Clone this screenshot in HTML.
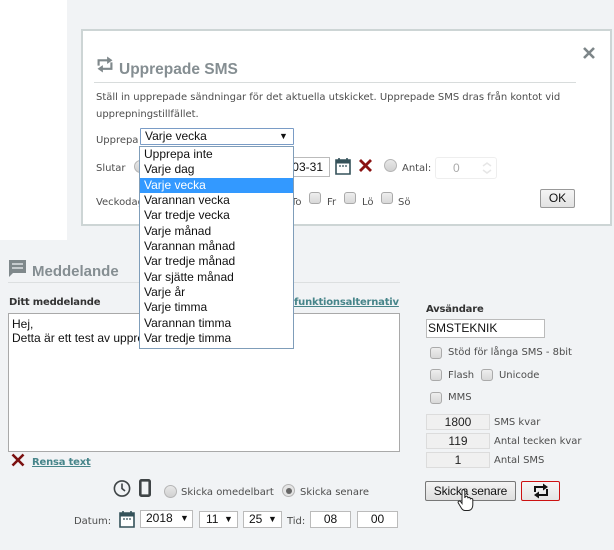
<!DOCTYPE html>
<html><head><meta charset="utf-8">
<style>
html,body{margin:0;padding:0;}
body{width:614px;height:550px;background:#f1f3f5;position:relative;overflow:hidden;font-family:"Liberation Sans",sans-serif;}
.a{position:absolute;white-space:nowrap;}
.v{font-family:"DejaVu Sans",sans-serif;font-size:10px;color:#4d4d4d;line-height:12px;letter-spacing:-.02px;}
.b{font-weight:bold;letter-spacing:-.2px;}
.box{position:absolute;box-sizing:border-box;background:#fff;border:1px solid #bbb;font-size:12px;color:#111;text-align:center;}
.cb{position:absolute;box-sizing:border-box;width:12px;height:12px;border:1px solid #aaa;border-radius:3px;background:linear-gradient(#eee,#d8d8d8);}
.rd{position:absolute;box-sizing:border-box;width:13px;height:13px;border:1px solid #b5b5b5;border-radius:50%;background:linear-gradient(#e8e8e8,#d0d0d0);}
.stat{position:absolute;box-sizing:border-box;left:426px;width:64px;height:16px;border:1px solid #dcdcdc;background:#f0f0f0;font-size:12px;line-height:14px;color:#222;text-align:center;}
.it{position:absolute;left:4px;font-size:12px;line-height:15px;color:#111;white-space:nowrap;}
svg{position:absolute;overflow:visible;}
</style></head><body>
<div class="a" style="left:0;top:0;width:67px;height:240px;background:#fff;"></div>

<!-- modal -->
<div class="a" style="left:81px;top:29px;width:531px;height:197px;box-sizing:border-box;background:#fff;border:2px solid #cdd5d5;"></div>
<svg style="left:97px;top:56px" width="16" height="16" viewBox="0 0 14 15" fill="none" stroke="#7f888b" stroke-width="2"><path d="M1 9V4H10"/><path d="M9 .5L14 4 9 7.500z" fill="#7f888b" stroke="none"/><path d="M13 6V12H4"/><path d="M5 8.500L0 12l5 3.500z" fill="#7f888b" stroke="none"/></svg>
<div class="a" style="left:119px;top:61px;font-size:15.5px;line-height:18px;font-weight:bold;color:#858e92;">Upprepade SMS</div>
<div class="a" style="left:94px;top:82px;width:482px;height:1px;background:#d8dcdc;"></div>
<svg style="left:582px;top:46px" width="14" height="14" viewBox="0 0 14 14" stroke="#7d8689" stroke-width="2.6" fill="none"><path d="M2 2l10 10M12 2L2 12"/></svg>
<div class="a v" style="left:96px;top:92px;">Ställ in upprepade sändningar för det aktuella utskicket. Upprepade SMS dras från kontot vid</div>
<div class="a v" style="left:96px;top:109px;">upprepningstillfället.</div>
<div class="a v" style="left:96px;top:135px;">Upprepa</div>
<div class="a v" style="left:96px;top:163px;">Slutar</div>
<div class="a v" style="left:96px;top:197px;">Veckodag</div>
<div class="rd" style="left:134px;top:160px;"></div>
<div class="box" style="left:240px;top:157px;width:90px;height:20px;text-align:right;padding:2px 6px 0 0;line-height:15px;">2019-03-31</div>
<svg style="left:335px;top:157px" width="16" height="18" viewBox="0 0 16 18"><path d="M1 3h14v14H1z" fill="#fff" stroke="#35525a" stroke-width="1.6"/><path d="M1 3h14v3.500H1z" fill="#35525a"/><path d="M4 1v3M12 1v3" stroke="#35525a" stroke-width="1.600"/><path d="M4 9h2M7 9h2M10 9h2" stroke="#35525a" stroke-width="1.200"/></svg>
<svg style="left:359px;top:159px" width="13" height="13" viewBox="0 0 13 13" stroke="#8a1212" stroke-width="2.800" fill="none"><path d="M1 1l11 11M12 1L1 12"/></svg>
<div class="rd" style="left:384px;top:159px;"></div>
<div class="a v" style="left:402px;top:163px;">Antal:</div>
<div class="a" style="left:435px;top:157px;width:62px;height:22px;box-sizing:border-box;border:1px solid #eee;border-radius:3px;background:#fff;font-size:12px;line-height:20px;color:#aaa;"><span style="position:absolute;left:17px;">0</span></div>
<svg style="left:481px;top:161px" width="12" height="14" viewBox="0 0 12 14" fill="none" stroke="#e6e6e6" stroke-width="1.500"><path d="M2 5l4-3 4 3M2 9l4 3 4-3"/></svg>
<div class="a v" style="left:291px;top:197px;">To</div>
<div class="cb" style="left:309px;top:192px;"></div><div class="a v" style="left:327px;top:197px;">Fr</div>
<div class="cb" style="left:344px;top:192px;"></div><div class="a v" style="left:362px;top:197px;">Lö</div>
<div class="cb" style="left:381px;top:192px;"></div><div class="a v" style="left:398px;top:197px;">Sö</div>
<div class="a" style="left:540px;top:189px;width:35px;height:19px;box-sizing:border-box;border:1px solid #999;border-radius:2px;background:linear-gradient(#f5f5f5,#e2e2e2);font-size:12px;line-height:17px;text-align:center;color:#111;">OK</div>

<!-- lower section -->
<svg style="left:9px;top:260px" width="17" height="17" viewBox="0 0 17 17"><path d="M0 0h17v13H4l-4 4z" fill="#7f888b"/><path d="M3 4h11M3 8h11" stroke="#f1f3f5" stroke-width="1.300"/></svg>
<div class="a" style="left:32px;top:263px;font-size:15px;line-height:18px;font-weight:bold;color:#858e92;">Meddelande</div>
<div class="a" style="left:8px;top:282px;width:392px;height:1px;background:#dcdfe0;"></div>
<div class="a v b" style="left:9px;top:297px;color:#333;">Ditt meddelande</div>
<div class="a v b" style="left:294px;top:297px;color:#47858a;text-decoration:underline;">funktionsalternativ</div>
<div class="a" style="left:8px;top:313px;width:392px;height:139px;box-sizing:border-box;background:#fff;border:1px solid #a9a9a9;padding:3px 3px;font-size:12px;line-height:14px;color:#111;">Hej,<br>Detta är ett test av upprepade SMS</div>
<svg style="left:12px;top:454px" width="12" height="12" viewBox="0 0 12 12" stroke="#7b1010" stroke-width="2.600" fill="none"><path d="M0.500 0.500l11 11M11.500 0.500l-11 11"/></svg>
<div class="a v b" style="left:32px;top:457px;color:#47858a;text-decoration:underline;">Rensa text</div>

<svg style="left:113px;top:479px" width="18" height="18" viewBox="0 0 18 18" fill="none" stroke="#3f4446" stroke-width="1.600"><circle cx="9" cy="9.500" r="7.600"/><path d="M9 4.500v5l3 2.500"/></svg>
<svg style="left:139px;top:479px" width="12" height="18" viewBox="0 0 12 18" fill="none" stroke="#3f4446" stroke-width="2.600"><rect x="1.300" y="1.300" width="9.400" height="15.400" rx="1.200"/></svg>
<div class="rd" style="left:164px;top:485px;"></div>
<div class="a v" style="left:181px;top:487px;">Skicka omedelbart</div>
<div class="rd" style="left:282px;top:484px;background:#e4e4e4;"></div>
<div class="a" style="left:286px;top:488px;width:6px;height:6px;border-radius:50%;background:#666;"></div>
<div class="a v" style="left:300px;top:487px;">Skicka senare</div>

<div class="a v" style="left:74px;top:516px;">Datum:</div>
<svg style="left:119px;top:510px" width="16" height="18" viewBox="0 0 16 18"><path d="M1 3h14v14H1z" fill="#fff" stroke="#35525a" stroke-width="1.600"/><path d="M1 3h14v3.500H1z" fill="#35525a"/><path d="M4 1v3M12 1v3" stroke="#35525a" stroke-width="1.600"/><path d="M4 9h2M7 9h2M10 9h2" stroke="#35525a" stroke-width="1.200"/></svg>
<div class="box" style="left:140px;top:510px;width:53px;height:18px;text-align:left;padding-left:5px;line-height:15px;">2018<span style="position:absolute;left:39px;top:0;font-size:9px;">▼</span></div>
<div class="box" style="left:199px;top:511px;width:39px;height:17px;text-align:left;padding-left:6px;line-height:15px;">11<span style="position:absolute;left:24px;top:0;font-size:9px;">▼</span></div>
<div class="box" style="left:243px;top:511px;width:39px;height:17px;text-align:left;padding-left:5px;line-height:15px;">25<span style="position:absolute;left:24px;top:0;font-size:9px;">▼</span></div>
<div class="a v" style="left:287px;top:516px;">Tid:</div>
<div class="box" style="left:310px;top:511px;width:41px;height:17px;line-height:15px;">08</div>
<div class="box" style="left:357px;top:511px;width:41px;height:17px;line-height:15px;">00</div>

<div class="a v b" style="left:426px;top:304px;color:#333;">Avsändare</div>
<div class="box" style="left:426px;top:319px;width:119px;height:19px;text-align:left;padding-left:1px;line-height:17px;">SMSTEKNIK</div>
<div class="cb" style="left:430px;top:347px;"></div><div class="a v" style="left:448px;top:347px;">Stöd för långa SMS - 8bit</div>
<div class="cb" style="left:430px;top:369px;"></div><div class="a v" style="left:448px;top:370px;">Flash</div>
<div class="cb" style="left:481px;top:369px;"></div><div class="a v" style="left:499px;top:370px;">Unicode</div>
<div class="cb" style="left:430px;top:392px;"></div><div class="a v" style="left:448px;top:392px;">MMS</div>
<div class="stat" style="top:414px;">1800</div><div class="a v" style="left:494px;top:417px;">SMS kvar</div>
<div class="stat" style="top:433px;">119</div><div class="a v" style="left:494px;top:436px;">Antal tecken kvar</div>
<div class="stat" style="top:452px;">1</div><div class="a v" style="left:494px;top:455px;">Antal SMS</div>
<div class="a" style="left:425px;top:481px;width:91px;height:20px;box-sizing:border-box;border:1px solid #777;border-radius:2px;background:linear-gradient(#f4f4f4,#dedede);font-size:12px;letter-spacing:-.15px;line-height:18px;text-align:center;color:#111;">Skicka senare</div>
<div class="a" style="left:521px;top:481px;width:39px;height:20px;box-sizing:border-box;border:1px solid #c11;border-radius:2px;background:linear-gradient(#f6f6f6,#e4e4e4);"></div>
<svg style="left:534px;top:483px" width="14" height="15" viewBox="0 0 14 15" fill="none" stroke="#111" stroke-width="2"><path d="M1 9V4H10"/><path d="M9 .5L14 4 9 7.500z" fill="#111" stroke="none"/><path d="M13 6V12H4"/><path d="M5 8.500L0 12l5 3.500z" fill="#111" stroke="none"/></svg>
<svg style="left:457px;top:489px" width="18" height="23" viewBox="0 0 18 23"><path d="M5 2a1.400 1.400 0 0 1 2.800 0v7l.4-1a1.400 1.400 0 0 1 2.600.4v.8a1.300 1.300 0 0 1 2.500.4v.7a1.300 1.300 0 0 1 2.500.5V16c0 3-1.700 5.500-4.500 5.500H8c-2 0-3-1.200-4-3L1.300 14c-.8-1.500 1-2.800 2.200-1.500L5 14.500z" fill="#fff" stroke="#222" stroke-width="1"/></svg>

<!-- select -->
<div class="a" style="left:140px;top:128px;width:154px;height:17px;box-sizing:border-box;background:#fff;border:1px solid #7a9cc6;border-radius:1px;font-size:12px;line-height:15px;color:#111;padding-left:4px;">Varje vecka<span style="position:absolute;left:138px;top:0;font-size:9px;">▼</span></div>
<div class="a" style="left:139px;top:146px;width:155px;height:203px;box-sizing:border-box;background:#fff;border:1px solid #7f9db9;">
<div class="a" style="left:0;top:31px;width:153px;height:15px;background:#3399ff;"></div>
<div class="it" style="top:0px;">Upprepa inte</div>
<div class="it" style="top:15px;">Varje dag</div>
<div class="it" style="top:31px;color:#fff;">Varje vecka</div>
<div class="it" style="top:46px;">Varannan vecka</div>
<div class="it" style="top:61px;">Var tredje vecka</div>
<div class="it" style="top:77px;">Varje månad</div>
<div class="it" style="top:92px;">Varannan månad</div>
<div class="it" style="top:107px;">Var tredje månad</div>
<div class="it" style="top:123px;">Var sjätte månad</div>
<div class="it" style="top:138px;">Varje år</div>
<div class="it" style="top:153px;">Varje timma</div>
<div class="it" style="top:169px;">Varannan timma</div>
<div class="it" style="top:184px;">Var tredje timma</div>
</div>
</body></html>
